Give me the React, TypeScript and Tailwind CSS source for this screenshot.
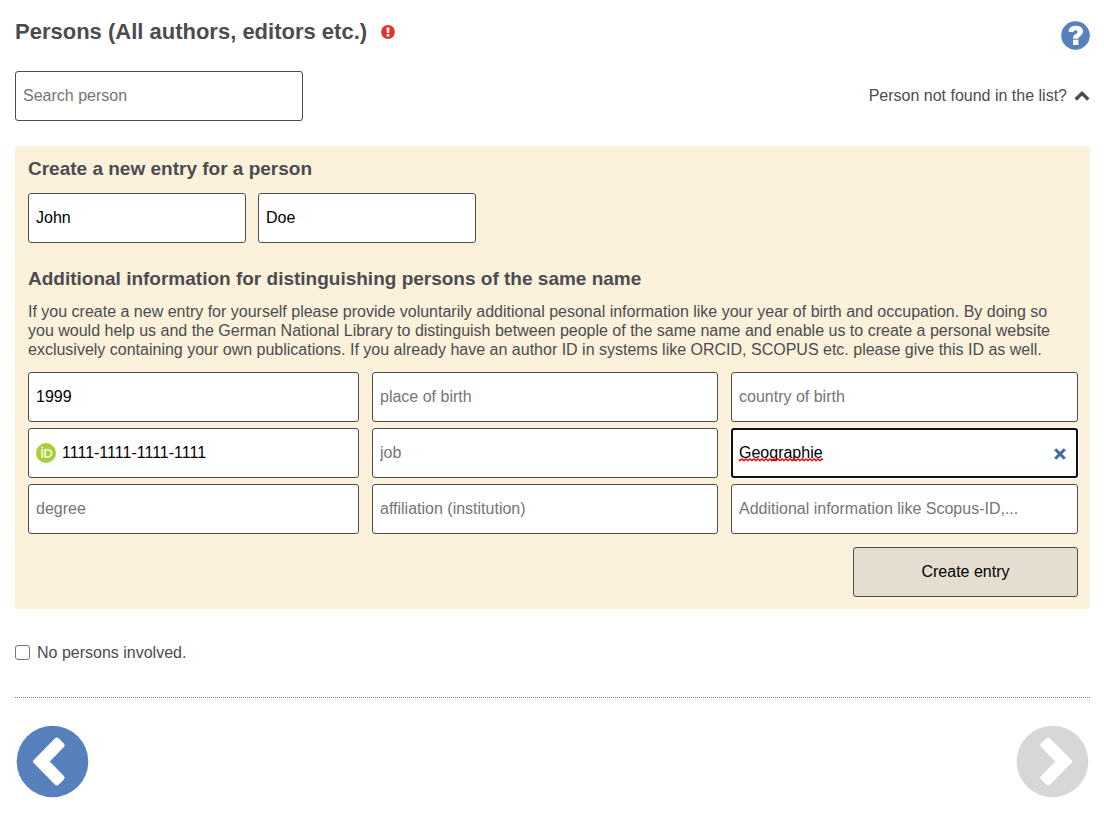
import React from "react";

const box =
  "block h-[50px] w-full min-w-0 rounded-[3px] border border-[#4c4d52] bg-white px-[7px] text-base text-black placeholder:text-[#757575] placeholder:opacity-100 outline-none";

function Field({ label, value }: { label: string; value?: string }) {
  return <input type="text" aria-label={label} placeholder={label} defaultValue={value} className={box} />;
}

export default function App() {
  return (
    <main className="flex flex-col pl-[15px] pr-[14px] font-['Liberation_Sans',Arial,sans-serif] text-base leading-[19px] text-[#4b4c50]">
      <header className="flex items-start justify-between pt-[18px]">
        <h1 className="flex items-center gap-[14px] text-[22px] font-bold leading-[28px]">
          Persons (All authors, editors etc.)
          <svg viewBox="0 0 14 14" className="size-[14px] shrink-0" role="img" aria-label="Required">
            <circle cx="7" cy="7" r="6.900" fill="#e3322f" />
            <path d="M5.500 2.600h3l-.3 5.500H5.800zM5.700 9h2.600v2.400H5.700z" fill="#fff" />
          </svg>
        </h1>
        <button type="button" aria-label="Help" className="mt-[3px]">
          <svg viewBox="0 0 29 29" className="block size-[29px]">
            <circle cx="14.5" cy="14.5" r="14.3" fill="#5681bd" />
            <path d="M7.600 10.800C7.600 6.800 10.700 4.800 14.700 4.800c4.300 0 7.300 2.100 7.300 5.800 0 2.400-1.400 3.700-2.800 4.600-1.200.8-1.800 1.100-1.800 2.600h-5.300c0-2.400.8-3.600 2.600-4.700 1.200-.8 1.900-1.300 1.900-2.300 0-1.100-.9-1.600-2.000-1.600-1.300 0-2.000.7-2.200 2.100z" fill="#fff" />
            <path d="M12.100 18.800h5.300v5.200h-5.300z" fill="#fff" />
          </svg>
        </button>
      </header>

      <div className="mt-[21px] flex items-center justify-between">
        <div className="w-[288px]">
          <Field label="Search person" />
        </div>
        <button type="button" aria-expanded="true" className="flex items-center gap-[7px] pb-[2px]">
          Person not found in the list?
          <svg viewBox="0 0 16 10" className="mt-[2px] h-[10px] w-[16px]">
            <path d="M1.700 8.500 8 2.400l6.300 6.100" fill="none" stroke="#4a4b50" strokeWidth="3.400" />
          </svg>
        </button>
      </div>

      <section className="mt-[25px] flex flex-col rounded-[3px] bg-[#fcf1da] pb-[12px] pl-[13px] pr-[12px] pt-[12px]">
        <h2 className="text-[19px] font-bold leading-[22px]">Create a new entry for a person</h2>
        <div className="mt-[13px] flex gap-[12px]">
          <div className="w-[218px]">
            <Field label="first name" value="John" />
          </div>
          <div className="w-[218px]">
            <Field label="last name" value="Doe" />
          </div>
        </div>
        <h2 className="mt-[25px] text-[19px] font-bold leading-[22px]">
          Additional information for distinguishing persons of the same name
        </h2>
        <p className="mt-[12px]">
          If you create a new entry for yourself please provide voluntarily additional pesonal information like your year of birth and occupation. By doing so
          <br />
          you would help us and the German National Library to distinguish between people of the same name and enable us to create a personal website
          <br />
          exclusively containing your own publications. If you already have an author ID in systems like ORCID, SCOPUS etc. please give this ID as well.
        </p>
        <div className="mt-[13px] grid grid-cols-[331fr_346fr_347fr] gap-x-[13px] gap-y-[6px]">
          <Field label="year of birth" value="1999" />
          <Field label="place of birth" />
          <Field label="country of birth" />
          <label className="flex h-[50px] items-center gap-[6px] rounded-[3px] border border-[#4c4d52] bg-white px-[7px] text-black">
            <svg viewBox="0 0 256 256" className="size-[20px] shrink-0" role="img" aria-label="ORCID">
              <circle cx="128" cy="128" r="128" fill="#a6ce39" />
              <g fill="#fff" stroke="#fff" strokeWidth="5">
                <path d="M70.900 79.100h15.400v107.100H70.900zM108.900 79.100h41.600c39.600 0 57 28.300 57 53.600 0 27.500-21.500 53.600-56.800 53.600h-41.800zm15.400 93.300h24.500c34.900 0 42.900-26.500 42.900-39.700 0-21.500-13.700-39.700-43.700-39.700h-23.700z" />
                <circle cx="78.600" cy="56.800" r="10.100" />
              </g>
            </svg>
            <input type="text" aria-label="ORCID" defaultValue="1111-1111-1111-1111" className="min-w-0 flex-1 bg-transparent pb-[2px] outline-none" />
          </label>
          <Field label="job" />
          <div className="relative">
            <input
              type="text"
              aria-label="subject"
              defaultValue="Geographie"
              className="block h-[50px] w-full rounded-[3px] border-2 border-[#101010] bg-white pl-[6px] pr-[32px] text-black ring-1 ring-white outline-none"
            />
            <svg className="pointer-events-none absolute left-[8px] top-[30px] h-[4px] w-[84px]" aria-hidden="true">
              <defs>
                <pattern id="squiggle" width="4" height="4" patternUnits="userSpaceOnUse">
                  <path d="M-1 .5 1 2.800 3 .8 5 2.800" fill="none" stroke="#f00" strokeWidth="1.300" />
                </pattern>
              </defs>
              <rect width="100%" height="4" fill="url(#squiggle)" />
            </svg>
            <button type="button" aria-label="Clear" className="absolute right-[12px] top-[20px]">
              <svg viewBox="0 0 12 12" className="block size-[12px]">
                <path d="m1.200 1.200 9.600 9.600m0-9.600-9.600 9.600" stroke="#4169a8" strokeWidth="3" />
              </svg>
            </button>
          </div>
          <Field label="degree" />
          <Field label="affiliation (institution)" />
          <Field label="Additional information like Scopus-ID,..." />
        </div>
        <button type="button" className="mt-[13px] h-[50px] w-[225px] self-end rounded-[3px] border border-[#4c4d52] bg-[#e4ddd0] pb-[2px] text-black">
          Create entry
        </button>
      </section>

      <label className="mt-[34px] flex items-center gap-[7px] self-start">
        <input type="checkbox" className="size-[15px] appearance-none rounded-[3px] border border-[#767676] bg-white" />
        No persons involved.
      </label>

      <nav className="mt-[35px] flex justify-between border-t border-dotted border-[#808080] px-[1px] pt-[27px]">
        <button type="button" aria-label="Previous step">
          <svg viewBox="0 0 73 73" className="block size-[73px]">
            <circle cx="36.500" cy="36.500" r="35.800" fill="#5681bd" />
            <path d="M17.500 35.200 38.800 13.500q2-2 4 0l4.800 4.800q2 2 0 4L33.800 36.500 47.600 50.700q2 2 0 4l-4.800 4.800q-2 2-4 0L17.500 37.800q-1.300-1.300 0-2.600z" fill="#fff" />
          </svg>
        </button>
        <button type="button" aria-label="Next step" disabled>
          <svg viewBox="0 0 73 73" className="block size-[73px]">
            <circle cx="36.500" cy="36.500" r="35.800" fill="#d7d7d7" />
            <path d="M55.500 35.200 34.200 13.500q-2-2-4 0l-4.800 4.800q-2 2 0 4L39.200 36.500 25.400 50.700q-2 2 0 4l4.800 4.800q2 2 4 0L55.500 37.800q1.300-1.300 0-2.600z" fill="#fff" />
          </svg>
        </button>
      </nav>
    </main>
  );
}
